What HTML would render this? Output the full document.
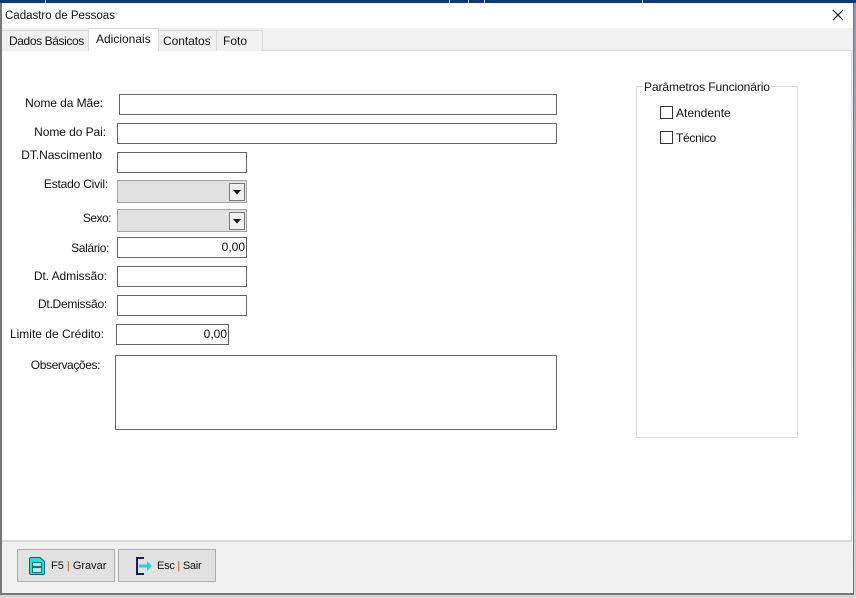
<!DOCTYPE html>
<html><head><meta charset="utf-8"><style>
html,body{margin:0;padding:0;background:#a6acb0}
#r{position:relative;width:856px;height:598px;overflow:hidden;background:#a9aeb2;font-family:"Liberation Sans",sans-serif;font-size:12px;color:#111}
#r div{position:absolute;box-sizing:border-box}
.t{white-space:nowrap;line-height:14px;height:14px}
.l{white-space:nowrap;line-height:14px;height:14px;text-align:right;letter-spacing:-.07px}
.i{background:#fff;border:1px solid #646464}
.n{line-height:19px;text-align:right;padding-right:1px}
.c{background:#e1e1e1;border:1px solid #a5a5a5}
.b{left:111px;top:2px;width:16px;height:18px;background:#f0f0f0;border:1px solid #777}
.tab{border:1px solid #d9d9d9;border-bottom:0;background:#f0f0f0;text-align:left;line-height:20px;white-space:nowrap}
.cb{width:13px;height:13px;background:#fff;border:1px solid #333}
.btn{background:#e1e1e1;border:1px solid #adadad;height:33px;top:549px;line-height:33px;white-space:nowrap}
</style></head><body><div id="r">
<div style="left:0;top:0;width:856px;height:3px;background:#0d3a73"></div>
<div style="left:45px;top:0;width:1px;height:3px;background:#ccc"></div>
<div style="left:449px;top:0;width:1px;height:3px;background:#ccc"></div>
<div style="left:468px;top:0;width:1px;height:3px;background:#ccc"></div>
<div style="left:484px;top:0;width:1px;height:3px;background:#ccc"></div>
<div style="left:642px;top:0;width:1px;height:3px;background:#ccc"></div>
<div style="left:0;top:595px;width:856px;height:3px;background:#d6d6d6"></div>
<div style="left:854px;top:3px;width:2px;height:592px;background:linear-gradient(#8a9cad,#b5b9bc 50%,#d0d0d0)"></div>

<div style="left:0;top:3px;width:854px;height:592px;background:#f0f0f0;border:1px solid #777;border-width:0 1px 2px 1px;border-left-width:2px"></div>
<div style="left:2px;top:3px;width:851px;height:25px;background:#fff"></div>
<div class="t" style="left:5px;top:9px;width:120px;font-size:11.5px">Cadastro de Pessoas</div>
<svg style="position:absolute;left:832px;top:9px" width="12" height="12" viewBox="0 0 12 12"><path d="M1 1L11 11M11 1L1 11" stroke="#111" stroke-width="1.1" fill="none"/></svg>

<div style="left:2px;top:50px;width:850px;height:492px;background:#fff;border:1px solid #d9d9d9;border-width:1px 1px 2px 0"></div>
<div class="tab" style="left:2px;top:30px;width:87px;height:21px;padding-left:7px;border-left:0;letter-spacing:-.4px">Dados Básicos</div>
<div class="tab" style="left:158px;top:30px;width:59px;height:21px;padding-left:5px;border-left:0;letter-spacing:-.05px">Contatos</div>
<div class="tab" style="left:216px;top:30px;width:47px;height:21px;padding-left:6px">Foto</div>
<div class="tab" style="left:88px;top:28px;width:71px;height:23px;background:#fff;padding-left:7px;line-height:21px">Adicionais</div>

<div class="l" style="left:0;top:96px;width:103px">Nome da Mãe:</div>
<div class="i" style="left:119px;top:94px;width:438px;height:21px"></div>
<div class="l" style="left:0;top:125px;width:106px">Nome do Pai:</div>
<div class="i" style="left:117px;top:123px;width:440px;height:21px"></div>
<div class="l" style="left:0;top:148px;width:102px;letter-spacing:-.05px">DT.Nascimento</div>
<div class="i" style="left:117px;top:152px;width:130px;height:21px"></div>
<div class="l" style="left:0;top:177px;width:108px;letter-spacing:-.2px">Estado Civil:</div>
<div class="c" style="left:117px;top:180px;width:130px;height:23px"><div class="b"><svg style="position:absolute;left:3px;top:6px" width="8" height="5"><path d="M0 0H8L4 4.5Z" fill="#111"/></svg></div></div>
<div class="l" style="left:0;top:211px;width:111px;letter-spacing:-.5px">Sexo:</div>
<div class="c" style="left:117px;top:209px;width:130px;height:23px"><div class="b"><svg style="position:absolute;left:3px;top:6px" width="8" height="5"><path d="M0 0H8L4 4.5Z" fill="#111"/></svg></div></div>
<div class="l" style="left:0;top:241px;width:109px;letter-spacing:-.35px">Salário:</div>
<div class="i n" style="left:117px;top:237px;width:130px;height:21px">0,00</div>
<div class="l" style="left:0;top:269px;width:107px">Dt. Admissão:</div>
<div class="i" style="left:117px;top:266px;width:130px;height:21px"></div>
<div class="l" style="left:0;top:297px;width:107px;letter-spacing:-.25px">Dt.Demissão:</div>
<div class="i" style="left:117px;top:295px;width:130px;height:21px"></div>
<div class="l" style="left:0;top:327px;width:104px;letter-spacing:0">Limite de Crédito:</div>
<div class="i n" style="left:116px;top:324px;width:113px;height:21px">0,00</div>
<div class="l" style="left:0;top:358px;width:100px;letter-spacing:-.4px">Observações:</div>
<div class="i" style="left:115px;top:355px;width:442px;height:75px"></div>

<div style="left:636px;top:86px;width:162px;height:352px;border:1px solid #dcdcdc"></div>
<div class="t" style="left:643px;top:80px;width:128px;background:#fff;padding-left:1px;letter-spacing:-.1px">Parâmetros Funcionário</div>
<div class="cb" style="left:660px;top:106px"></div>
<div class="t" style="left:676px;top:106px">Atendente</div>
<div class="cb" style="left:660px;top:131px"></div>
<div class="t" style="left:676px;top:131px;letter-spacing:-.3px">Técnico</div>

<div class="btn" style="left:17px;width:98px;padding-left:33px;font-size:11px">F5 <span style="color:#b5651d">|</span> Gravar</div>
<svg style="position:absolute;left:29px;top:557px" width="16" height="18" viewBox="0 0 16 18"><path d="M2 .5H11L15.500 4.500V16Q15.500 17.500 14 17.500H2Q.5 17.500 .5 16V2Q.5 .5 2 .5Z" fill="#14e4e4" stroke="#0d5f6a"/><rect x="3.500" y="5.500" width="9" height="4" fill="#a8f0f0" stroke="#2a6a74"/><rect x="3.500" y="10.500" width="9" height="5" fill="#a8f0f0" stroke="#2a6a74"/></svg>
<div class="btn" style="left:118px;width:98px;padding-left:38px;font-size:11px;letter-spacing:-.25px">Esc <span style="color:#b5651d">|</span> Sair</div>
<svg style="position:absolute;left:136px;top:557px" width="17" height="18" viewBox="0 0 17 18"><path d="M8 1H1V17H8" fill="none" stroke="#1f1a66" stroke-width="2"/><path d="M3 7.500H11V4L16 9L11 14V10.500H3Z" fill="#13dede"/></svg>
</div></body></html>
